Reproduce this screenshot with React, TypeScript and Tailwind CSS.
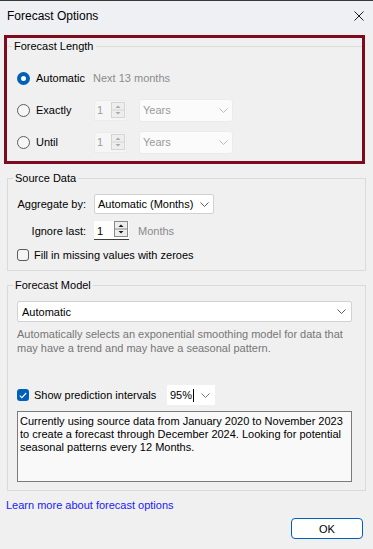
import { ReactNode } from "react"

const Chevron = ({ color = "#5c5c5c" }: { color?: string }) => (
    <svg width="9" height="5" viewBox="0 0 9 5" className="shrink-0">
        <polyline points="0.5,0.5 4.5,4.5 8.5,0.5" fill="none" stroke={color} strokeWidth="1" />
    </svg>
)

const Spinner = ({ disabled }: { disabled?: boolean }) => {
    const arrow = disabled ? "#a9a9a9" : "#1a1a1a"
    return (
        <svg width="14" height="16" viewBox="0 0 14 16" className="shrink-0">
            <rect x="0.5" y="0.5" width="13" height="15" fill={disabled ? "#eeeeee" : "#ededed"} stroke={disabled ? "#d4d4d4" : "#8a8a8a"} />
            <line x1="1" y1="8" x2="13" y2="8" stroke={disabled ? "#d4d4d4" : "#8a8a8a"} />
            <path d="M4.5 6 L7 3.5 L9.5 6 Z" fill={arrow} />
            <path d="M4.5 10 L7 12.5 L9.5 10 Z" fill={arrow} />
        </svg>
    )
}

const Radio = ({ checked }: { checked?: boolean }) =>
    checked ? (
        <span className="w-[13px] h-[13px] rounded-full bg-[#005fb8] flex items-center justify-center shrink-0">
            <span className="w-[5px] h-[5px] rounded-full bg-white" />
        </span>
    ) : (
        <span className="w-[13px] h-[13px] rounded-full border border-[#5e5e5e] bg-[#f6f6f6] shrink-0" />
    )

const Checkbox = ({ checked }: { checked?: boolean }) =>
    checked ? (
        <span className="w-[12px] h-[12px] rounded-[3px] bg-[#005fb8] flex items-center justify-center shrink-0">
            <svg width="8" height="7" viewBox="0 0 8 7">
                <polyline points="0.8,3.6 2.9,5.6 7.2,1" fill="none" stroke="white" strokeWidth="1.1" />
            </svg>
        </span>
    ) : (
        <span className="w-[12px] h-[12px] rounded-[3px] border border-[#5a5a5a] bg-[#f5f5f5] shrink-0" />
    )

const Group = ({ title, children, className }: { title: string; children: ReactNode; className?: string }) => (
    <fieldset className={className}>
        <legend className="ml-[5px] px-[2px] leading-[14px]">{title}</legend>
        {children}
    </fieldset>
)

const DisabledRow = ({ label }: { label: string }) => (
    <div className="h-[24px] flex items-center pl-[10px]">
        <div className="w-[76px] flex items-center gap-[6px]">
            <Radio />
            <span>{label}</span>
        </div>
        <div className="ml-[1px] w-[33px] h-[21px] flex items-center bg-[#f6f6f6] border border-[#ebebeb] rounded-[2px]">
            <span className="pl-[2px] text-[#9b9b9b]">1</span>
            <span className="ml-auto mr-[1px] flex">
                <Spinner disabled />
            </span>
        </div>
        <div className="ml-[12px] w-[94px] h-[23px] flex items-center justify-between pl-[3px] pr-[4px] bg-[#fbfbfb] border border-[#ebebeb] rounded-[3px]">
            <span className="text-[#9a9a9a]">Years</span>
            <Chevron color="#bdbdbd" />
        </div>
    </div>
)

export default function App() {
    return (
        <div className="w-[373px] h-[549px] overflow-hidden flex flex-col bg-[#f0f0f0] text-black text-[11px] leading-[14px] font-['Liberation_Sans',Arial,sans-serif]">
            <div className="h-[31px] shrink-0 flex items-center justify-between pl-[7px] pr-[9px] bg-[#eef0f3] border-t border-[#3a3a3a]">
                <span className="text-[12px]">Forecast Options</span>
                <svg width="10" height="10" viewBox="0 0 10 10">
                    <path d="M0.5 0.5 L9.5 9.5 M9.5 0.5 L0.5 9.5" stroke="#1a1a1a" strokeWidth="1" />
                </svg>
            </div>

            {/* highlighted group */}
            <div className="mt-[4px] ml-[4px] w-[361px] h-[129px] shrink-0 border-[3px] border-[#7e0a1d]">
                <Group title="Forecast Length" className="mt-[1px] border-t border-[#dcdcdc]">
                    <div className="pt-[13px] flex flex-col gap-[8px]">
                        <div className="h-[24px] flex items-center pl-[10px]">
                            <div className="w-[76px] flex items-center gap-[6px]">
                                <Radio checked />
                                <span>Automatic</span>
                            </div>
                            <span className="text-[#8c8c8c]">Next 13 months</span>
                        </div>
                        <DisabledRow label="Exactly" />
                        <DisabledRow label="Until" />
                    </div>
                </Group>
            </div>

            <Group title="Source Data" className="mt-[7px] ml-[7px] w-[359px] shrink-0 border border-[#dadada]">
                <div className="pl-[9px] pt-[9px] pb-[9px] flex flex-col">
                    <div className="h-[20px] flex items-center">
                        <span className="w-[69px] text-right">Aggregate by:</span>
                        <div className="ml-[8px] w-[120px] h-[20px] flex items-center justify-between pl-[3px] pr-[4px] bg-white border border-[#d2d2d2] rounded-[2px]">
                            <span>Automatic (Months)</span>
                            <Chevron />
                        </div>
                    </div>
                    <div className="mt-[7px] h-[19px] flex items-center">
                        <span className="w-[69px] text-right">Ignore last:</span>
                        <div className="ml-[8px] w-[35px] h-[19px] flex items-start bg-white border-b border-[#3c3c3c]">
                            <span className="pl-[3px] pt-[3px]">1</span>
                            <span className="ml-auto mr-[1px] flex">
                                <Spinner />
                            </span>
                        </div>
                        <span className="ml-[9px] text-[#8a8a8a]">Months</span>
                    </div>
                    <div className="mt-[9px] h-[12px] flex items-center gap-[5px]">
                        <Checkbox />
                        <span>Fill in missing values with zeroes</span>
                    </div>
                </div>
            </Group>

            <Group title="Forecast Model" className="mt-[7px] ml-[7px] w-[359px] shrink-0 border border-[#dadada]">
                <div className="pl-[9px] pt-[9px] pb-[8px] flex flex-col">
                    <div className="w-[335px] h-[21px] flex items-center justify-between pl-[4px] pr-[5px] bg-white border border-[#d2d2d2] rounded-[2px]">
                        <span>Automatic</span>
                        <Chevron />
                    </div>
                    <p className="mt-[5px] whitespace-nowrap text-[#767676]">
                        Automatically selects an exponential smoothing model for data that
                        <br />
                        may have a trend and may have a seasonal pattern.
                    </p>
                    <div className="mt-[30px] h-[20px] flex items-center">
                        <div className="w-[150px] flex items-center gap-[5px]">
                            <Checkbox checked />
                            <span>Show prediction intervals</span>
                        </div>
                        <div className="w-[48px] h-[20px] flex items-center justify-between pl-[3px] pr-[5px] bg-white">
                            <span className="flex items-center">
                                95%
                                <span className="ml-[1px] w-px h-[13px] bg-black" />
                            </span>
                            <Chevron color="#7a7a7a" />
                        </div>
                    </div>
                    <div className="mt-[6px] w-[335px] h-[71px] pl-[2px] pt-[3px] bg-[#f9f9f9] border border-[#7a7a7a] leading-[13px] whitespace-nowrap">
                        Currently using source data from January 2020 to November 2023
                        <br />
                        to create a forecast through December 2024. Looking for potential
                        <br />
                        seasonal patterns every 12 Months.
                    </div>
                </div>
            </Group>

            <span className="mt-[7px] ml-[6px] text-[#1a1aff]">Learn more about forecast options</span>

            <button className="mt-[6px] mr-[10px] self-end w-[72px] h-[21px] bg-white border border-[#005fb8] rounded-[4px] text-[11px] leading-[14px]">
                OK
            </button>
        </div>
    )
}
